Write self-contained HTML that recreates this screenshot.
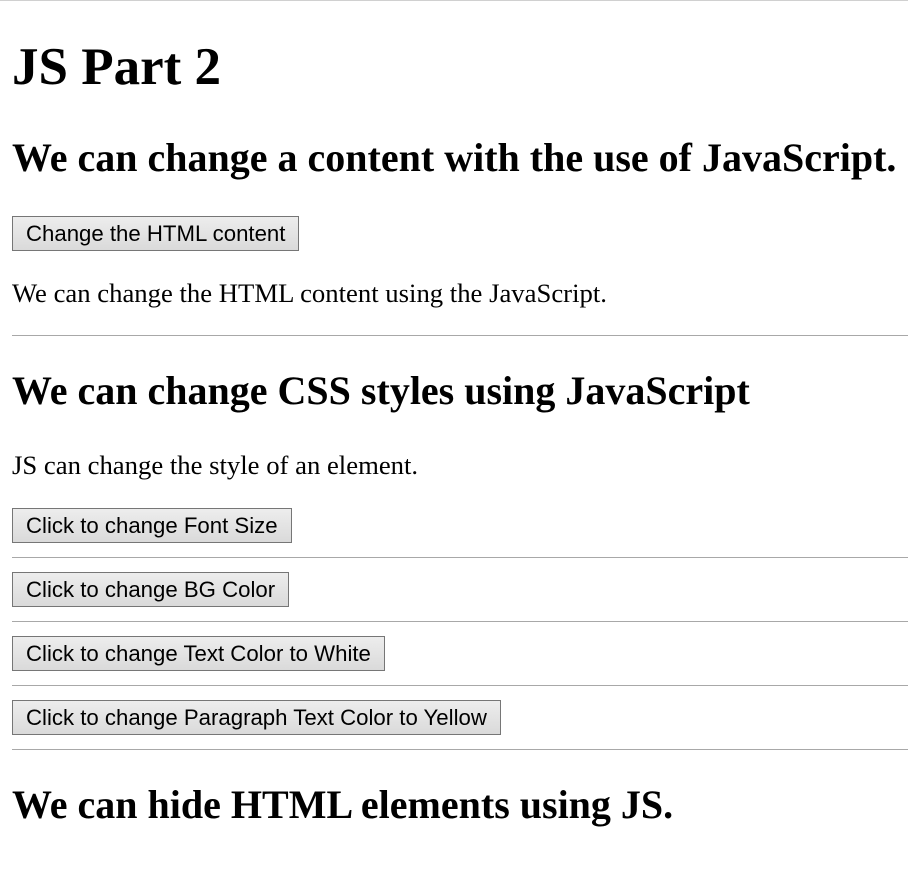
<!DOCTYPE html>
<html><head><meta charset="utf-8"><style>
html,body{margin:0;padding:0;background:#fff}
body{width:908px;height:872px;position:relative;overflow:hidden;font-family:"Liberation Serif",serif;color:#000;border-top:1px solid #d0d0d0;box-sizing:border-box}
.a{position:absolute;left:12px;margin:0;white-space:nowrap}
h1.a{font-size:53px;line-height:1.15;font-weight:bold}
h2.a{font-size:40px;line-height:1.15;font-weight:bold}
p.a{font-size:26.7px;line-height:1.15}
button.a{font-family:"Liberation Sans",Arial,sans-serif;font-size:22.2px;line-height:25px;height:35px;padding:0 13px;border:1px solid #767676;border-radius:0;background:linear-gradient(#ededed,#dadada);color:#000;box-sizing:border-box}
.hr{position:absolute;left:12px;right:0;height:0;border-top:1.5px solid #a8a8a8}
</style></head><body>
<h1 class="a" style="top:36px">JS Part 2</h1>
<h2 class="a" style="top:134px">We can change a content with the use of JavaScript.</h2>
<button class="a" style="top:215px">Change the HTML content</button>
<p class="a" style="top:277px">We can change the HTML content using the JavaScript.</p>
<div class="hr" style="top:334px"></div>
<h2 class="a" style="top:367px">We can change CSS styles using JavaScript</h2>
<p class="a" style="top:449px">JS can change the style of an element.</p>
<button class="a" style="top:507px">Click to change Font Size</button>
<div class="hr" style="top:556px"></div>
<button class="a" style="top:571px">Click to change BG Color</button>
<div class="hr" style="top:620px"></div>
<button class="a" style="top:635px">Click to change Text Color to White</button>
<div class="hr" style="top:684px"></div>
<button class="a" style="top:699px">Click to change Paragraph Text Color to Yellow</button>
<div class="hr" style="top:748px"></div>
<h2 class="a" style="top:781px">We can hide HTML elements using JS.</h2>
</body></html>
